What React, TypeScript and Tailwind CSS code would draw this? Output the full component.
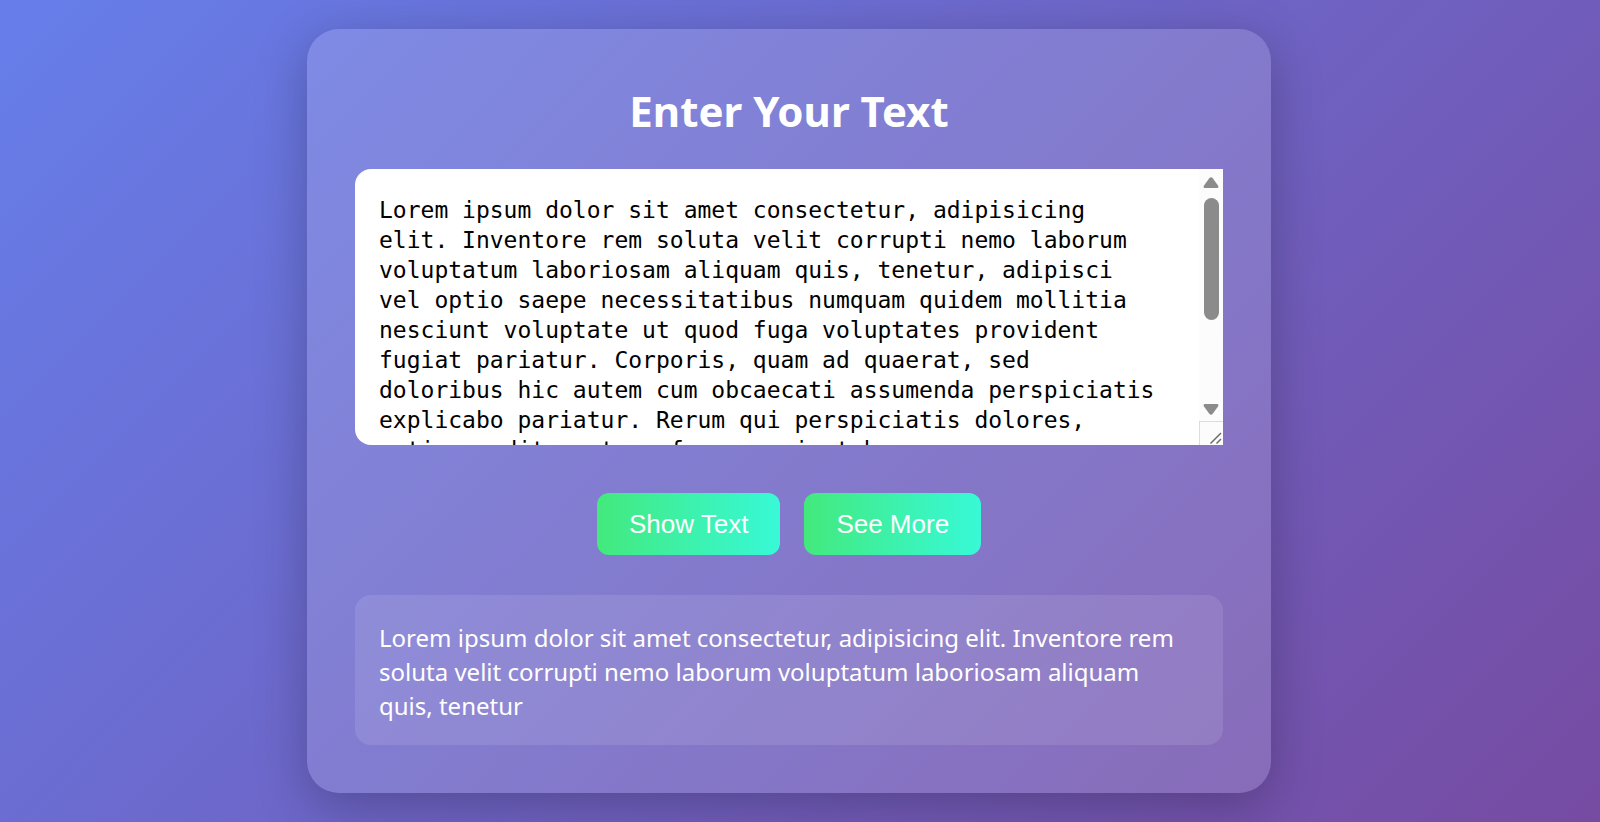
import { useState } from "react";

const initial =
  "Lorem ipsum dolor sit amet consectetur, adipisicing elit. Inventore rem soluta velit corrupti nemo laborum voluptatum laboriosam aliquam quis, tenetur, adipisci vel optio saepe necessitatibus numquam quidem mollitia nesciunt voluptate ut quod fuga voluptates provident fugiat pariatur. Corporis, quam ad quaerat, sed doloribus hic autem cum obcaecati assumenda perspiciatis explicabo pariatur. Rerum qui perspiciatis dolores, optio, audit nostrum fuga eveniunt harum";

const excerptEnd = initial.indexOf("tenetur") + "tenetur".length;

const buttonClass =
  "cursor-pointer rounded-xl bg-linear-to-r from-[#43e97b] to-[#38f9d7] px-8 py-4 font-['Liberation_Sans',Arial,sans-serif] text-[26px] leading-[30px]";

function ScrollTrack() {
  return (
    <div aria-hidden="true" className="flex w-6 shrink-0 flex-col items-center bg-[#fcfcfc]">
      <svg className="mt-2 h-3 w-4 shrink-0" viewBox="0 0 16 12" fill="#8b8b8b">
        <path d="M6.3 1.2Q8 -.8 9.7 1.2L15 8.6Q16.2 11 14 11H2Q-.2 11 1 8.6Z" />
      </svg>
      <div className="mt-[9px] h-[122px] w-[15px] rounded-full bg-[#8b8b8b]" />
      <svg className="mt-auto mb-1.5 h-3 w-4 shrink-0" viewBox="0 0 16 12" fill="#8b8b8b">
        <path d="M6.3 10.8Q8 12.8 9.7 10.8L15 3.4Q16.2 1 14 1H2Q-.2 1 1 3.4Z" />
      </svg>
      <svg
        className="h-6 w-6 shrink-0 border-t border-l border-[#dcdcdc]"
        viewBox="0 0 23 23"
        fill="none"
        stroke="#6b6b6b"
        strokeWidth="1.5"
      >
        <path d="M10.5 21.5L21 11M16.5 21.5L21 17" />
      </svg>
    </div>
  );
}

export default function App() {
  const [text, setText] = useState(initial);
  const [shown, setShown] = useState(initial.slice(0, excerptEnd));

  return (
    <main className="flex min-h-screen items-center justify-center bg-[linear-gradient(135deg,#667eea,#764ba2)] pr-[22px] font-['Noto_Sans','Segoe_UI',sans-serif]">
      <section className="w-full max-w-[964px] rounded-[32px] bg-white/15 p-12 text-white shadow-[0_13px_51px_rgba(0,0,0,0.25)]">
        <h1 className="pt-1 pb-7 text-center text-[42px] leading-[60px] font-bold">Enter Your Text</h1>
        <div className="flex h-[276px] overflow-hidden rounded-l-2xl bg-white">
          <textarea
            aria-label="Your text"
            value={text}
            onChange={(e) => setText(e.target.value)}
            className="block min-w-0 flex-1 resize-none pt-[26px] pr-10 pl-6 font-['DejaVu_Sans_Mono',monospace] text-[23px] leading-[30px] text-black outline-none"
          />
          <ScrollTrack />
        </div>
        <div className="mt-12 flex justify-center gap-6">
          <button type="button" className={buttonClass} onClick={() => setShown(text.slice(0, excerptEnd))}>
            Show Text
          </button>
          <button type="button" className={buttonClass} onClick={() => setShown(text)}>
            See More
          </button>
        </div>
        <p className="mt-10 rounded-2xl bg-white/10 px-6 pt-[26px] pb-[22px] text-[24px] leading-[34px]">{shown}</p>
      </section>
    </main>
  );
}
